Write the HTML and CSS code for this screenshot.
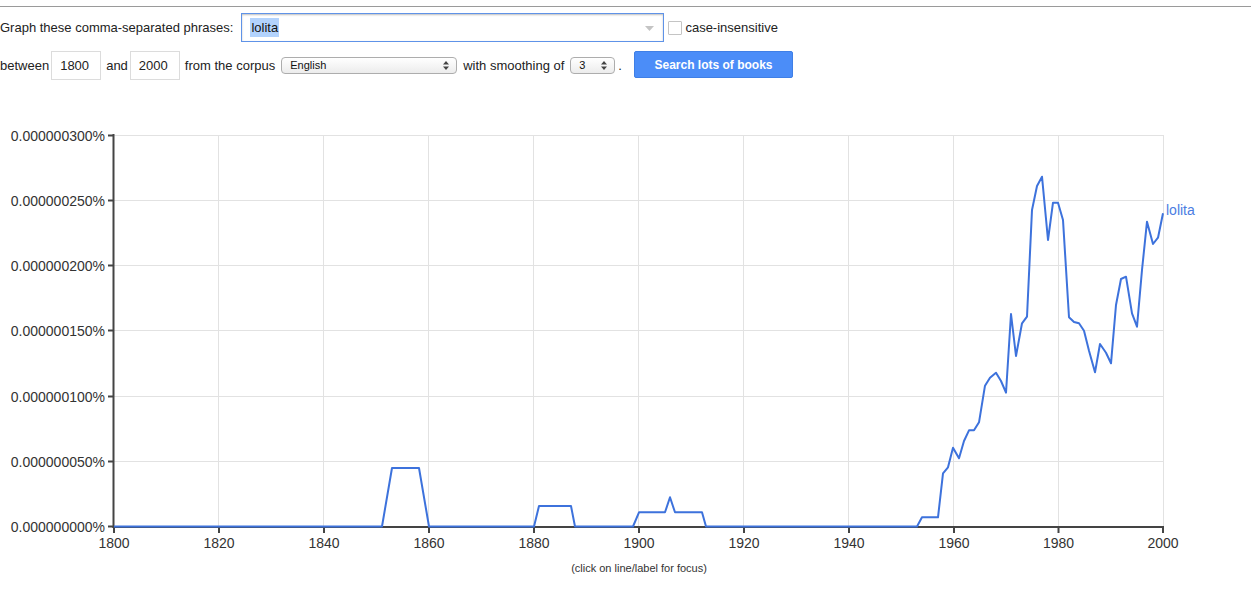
FILE: index.html
```html
<!DOCTYPE html>
<html>
<head>
<meta charset="utf-8">
<title>Ngram Viewer</title>
<link rel="stylesheet" href="styles.css">
</head>
<body>
<div class="topbar"></div>
<form class="query">
  <div class="row row-phrases">
    <span class="label">Graph these comma-separated phrases:</span>
    <div class="phrase-input">
      <span class="sel">lolita</span>
      <svg class="drop" width="9" height="5" viewBox="0 0 9 5"><path d="M0 0H9L4.5 5Z" fill="#c4c4c4"/></svg>
    </div>
    <span class="checkbox"></span>
    <span class="label">case-insensitive</span>
  </div>
  <div class="row row-range">
    <span class="label">between</span>
    <span class="year">1800</span>
    <span class="label">and</span>
    <span class="year">2000</span>
    <span class="label">from the corpus</span>
    <span class="select corpus">English
      <svg class="updown" width="6" height="9" viewBox="0 0 6 9"><path d="M0 3.5L3 0L6 3.5Z M0 5.5L3 9L6 5.5Z" fill="#444"/></svg>
    </span>
    <span class="label">with smoothing of</span>
    <span class="select smooth">3
      <svg class="updown" width="6" height="9" viewBox="0 0 6 9"><path d="M0 3.5L3 0L6 3.5Z M0 5.5L3 9L6 5.5Z" fill="#444"/></svg>
    </span>
    <span class="label dot">.</span>
    <span class="button">Search lots of books</span>
  </div>
</form>
<div class="chart">
  <svg width="1251" height="500" viewBox="0 100 1251 500" class="plot">
    <g class="grid" stroke="#e2e2e2" stroke-width="1">
      <line x1="218.5" y1="135" x2="218.5" y2="527"/>
      <line x1="323.5" y1="135" x2="323.5" y2="527"/>
      <line x1="428.5" y1="135" x2="428.5" y2="527"/>
      <line x1="533.5" y1="135" x2="533.5" y2="527"/>
      <line x1="638.5" y1="135" x2="638.5" y2="527"/>
      <line x1="743.5" y1="135" x2="743.5" y2="527"/>
      <line x1="848.5" y1="135" x2="848.5" y2="527"/>
      <line x1="953.5" y1="135" x2="953.5" y2="527"/>
      <line x1="1058.5" y1="135" x2="1058.5" y2="527"/>
      <line x1="1163.5" y1="135" x2="1163.5" y2="527"/>
      <line x1="114" y1="135.5" x2="1164" y2="135.5"/>
      <line x1="114" y1="200.5" x2="1164" y2="200.5"/>
      <line x1="114" y1="265.5" x2="1164" y2="265.5"/>
      <line x1="114" y1="330.5" x2="1164" y2="330.5"/>
      <line x1="114" y1="396.5" x2="1164" y2="396.5"/>
      <line x1="114" y1="461.5" x2="1164" y2="461.5"/>
    </g>
    <g class="axes" stroke="#444" stroke-width="2">
      <line x1="113.5" y1="134" x2="113.5" y2="528"/>
      <line x1="112.5" y1="527" x2="1164" y2="527"/>
      <line x1="108" y1="135.5" x2="113" y2="135.5"/>
      <line x1="108" y1="200.5" x2="113" y2="200.5"/>
      <line x1="108" y1="265.5" x2="113" y2="265.5"/>
      <line x1="108" y1="330.5" x2="113" y2="330.5"/>
      <line x1="108" y1="396.5" x2="113" y2="396.5"/>
      <line x1="108" y1="461.5" x2="113" y2="461.5"/>
      <line x1="108" y1="526.5" x2="113" y2="526.5"/>
      <line x1="114" y1="527" x2="114" y2="533"/>
      <line x1="219" y1="527" x2="219" y2="533"/>
      <line x1="324" y1="527" x2="324" y2="533"/>
      <line x1="429" y1="527" x2="429" y2="533"/>
      <line x1="534" y1="527" x2="534" y2="533"/>
      <line x1="639" y1="527" x2="639" y2="533"/>
      <line x1="744" y1="527" x2="744" y2="533"/>
      <line x1="849" y1="527" x2="849" y2="533"/>
      <line x1="954" y1="527" x2="954" y2="533"/>
      <line x1="1058.5" y1="527" x2="1058.5" y2="533"/>
      <line x1="1163" y1="527" x2="1163" y2="533"/>
    </g>
    <g class="ylabels" text-anchor="end">
      <text x="105" y="140.5">0.000000300%</text>
      <text x="105" y="205.5">0.000000250%</text>
      <text x="105" y="270.5">0.000000200%</text>
      <text x="105" y="335.5">0.000000150%</text>
      <text x="105" y="401.5">0.000000100%</text>
      <text x="105" y="466.5">0.000000050%</text>
      <text x="105" y="531.5">0.000000000%</text>
    </g>
    <g class="xlabels" text-anchor="middle">
      <text x="114" y="548">1800</text>
      <text x="219" y="548">1820</text>
      <text x="324" y="548">1840</text>
      <text x="429" y="548">1860</text>
      <text x="534" y="548">1880</text>
      <text x="639" y="548">1900</text>
      <text x="744" y="548">1920</text>
      <text x="849" y="548">1940</text>
      <text x="954" y="548">1960</text>
      <text x="1058.5" y="548">1980</text>
      <text x="1163" y="548">2000</text>
    </g>
    <polyline class="series" fill="none" stroke="#3d72dc" stroke-width="2" stroke-linejoin="round"
      points="114,526.5 382,526.5 392,468 419,468 429,526.5 534,526.5 539,506 571,506 575,526.5 633,526.5 639,512.3 665,512.3 670,497.3 675,512.3 702,512.3 706,526.5 917,526.5 922,517.3 938,517.3 943,473.3 948,467.3 953,447.7 959,458.3 964,441 969,430.3 974,430.3 979,422.3 985,385.7 990,377.7 996,372.7 1001,381 1006,392.7 1011,314 1016,356 1022,323.3 1027,316.7 1032,210 1037,186 1042,176.7 1048,240 1053,202.7 1058,202.7 1063,220 1069,317.3 1074,322 1079,323.3 1084,330.7 1089,350.7 1095,372.3 1100,344 1106,352.7 1111,363.3 1116,305 1121,279 1126,276.7 1132,313.3 1137,326.7 1142,270 1147,221.7 1153,244 1158,237.7 1163,213.3"/>
    <text class="series-label" x="1166" y="215">lolita</text>
    <text class="hint" x="639" y="572" text-anchor="middle">(click on line/label for focus)</text>
  </svg>
</div>
</body>
</html>
```

FILE: styles.css
```css
html, body {
  margin: 0;
  padding: 0;
  background: #fff;
}
body {
  font-family: "Liberation Sans", Arial, sans-serif;
  font-size: 13px;
  color: #222;
  width: 1251px;
  height: 607px;
  overflow: hidden;
}
.topbar {
  height: 6px;
  border-bottom: 1px solid #9a9a9a;
}
.query {
  padding-top: 6px;
}
.row {
  display: flex;
  align-items: center;
}
.row-phrases {
  height: 29px;
}
.row-range {
  margin-top: 9px;
  height: 28px;
}
.label {
  white-space: nowrap;
}
.row-phrases .label:first-child {
  margin-right: 8px;
}
.phrase-input {
  box-sizing: border-box;
  width: 423px;
  height: 29px;
  border: 1px solid #5f93e8;
  box-shadow: inset 0 1px 2px rgba(0,0,0,0.25);
  display: flex;
  align-items: center;
  padding-left: 8px;
  position: relative;
}
.sel {
  background: #b3d3fd;
  line-height: 19px;
  padding: 0 1px;
  color: #111;
}
.drop {
  position: absolute;
  right: 9px;
  top: 12px;
}
.checkbox {
  box-sizing: border-box;
  width: 14px;
  height: 14px;
  border: 1px solid #c4c4c4;
  border-radius: 1px;
  margin: 0 3px 0 4px;
  background: #fff;
}
.year {
  box-sizing: border-box;
  width: 50px;
  height: 29px;
  border: 1px solid #dcdcdc;
  padding-left: 8px;
  line-height: 27px;
  margin: 0 5px 0 2px;
}
.select {
  box-sizing: border-box;
  height: 17px;
  border: 1px solid #adadad;
  border-radius: 4px;
  background: linear-gradient(#ffffff, #ececec);
  font-size: 11px;
  line-height: 15px;
  padding-left: 8px;
  position: relative;
  color: #111;
}
.corpus {
  width: 176px;
  margin: 0 6px 0 6px;
}
.smooth {
  width: 45px;
  margin: 0 3px 0 6px;
}
.updown {
  position: absolute;
  right: 7px;
  top: 3px;
}
.dot {
  margin-right: 12px;
}
.button {
  box-sizing: border-box;
  width: 159px;
  height: 27px;
  background: #4b8df8;
  border: 1px solid #3f7fe6;
  border-radius: 2px;
  color: #fff;
  font-weight: bold;
  font-size: 12px;
  display: flex;
  align-items: center;
  justify-content: center;
  margin-top: -1px;
}
.chart {
  margin-top: 21px;
}
.plot {
  display: block;
}
.ylabels text, .xlabels text {
  font-family: "Liberation Sans", Arial, sans-serif;
  font-size: 14px;
  fill: #333;
}
.series-label {
  font-family: "Liberation Sans", Arial, sans-serif;
  font-size: 14px;
  fill: #4a7de2;
}
.hint {
  font-family: "Liberation Sans", Arial, sans-serif;
  font-size: 11px;
  fill: #333;
}
```
